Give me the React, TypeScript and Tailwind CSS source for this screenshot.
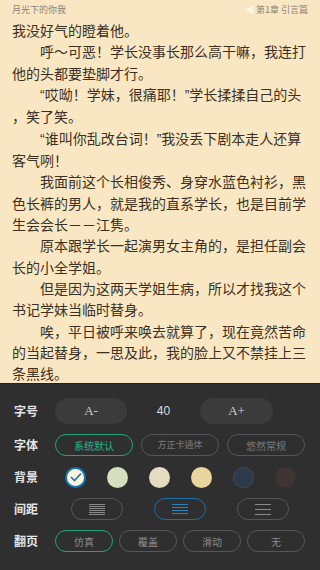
import React from "react";

const cjk = { fontFamily: '"Noto Sans CJK SC", "Noto Sans", sans-serif' };

const lines: { text: string; indent?: boolean }[] = [
  { text: "我没好气的瞪着他。" },
  { text: "呼～可恶！学长没事长那么高干嘛，我连打", indent: true },
  { text: "他的头都要垫脚才行。" },
  { text: "“哎呦！学妹，很痛耶！”学长揉揉自己的头", indent: true },
  { text: "，笑了笑。" },
  { text: "“谁叫你乱改台词！”我没丢下剧本走人还算", indent: true },
  { text: "客气咧！" },
  { text: "我面前这个长相俊秀、身穿水蓝色衬衫，黑", indent: true },
  { text: "色长裤的男人，就是我的直系学长，也是目前学" },
  { text: "生会会长－－江隽。" },
  { text: "原本跟学长一起演男女主角的，是担任副会", indent: true },
  { text: "长的小全学姐。" },
  { text: "但是因为这两天学姐生病，所以才找我这个", indent: true },
  { text: "书记学妹当临时替身。" },
  { text: "唉，平日被呼来唤去就算了，现在竟然苦命", indent: true },
  { text: "的当起替身，一思及此，我的脸上又不禁挂上三" },
  { text: "条黑线。" },
];

// curly quotes render full width in the CJK face, the reference uses narrow ones
function withNarrowQuotes(text: string) {
  return text.split(/([“”])/).map((part, i) =>
    part === "“" || part === "”" ? (
      <span key={i} style={{ fontFamily: '"Liberation Sans", sans-serif' }}>
        {part}
      </span>
    ) : (
      <React.Fragment key={i}>{part}</React.Fragment>
    )
  );
}

function Label({ children }: { children: React.ReactNode }) {
  return (
    <div className="w-[41px] shrink-0 text-[12px] font-bold text-[#e4e4e4]">{children}</div>
  );
}

function SpacingIcon({ rows, gap, color }: { rows: number; gap: number; color: string }) {
  const h = (rows - 1) * gap + 1;
  return (
    <svg width="16" height={h} viewBox={`0 0 16 ${h}`}>
      {Array.from({ length: rows }).map((_, i) => (
        <rect key={i} x="0" y={i * gap} width="16" height="1" fill={color} />
      ))}
    </svg>
  );
}

export default function App() {
  const swatches = ["#d6dfbf", "#e3dcc1", "#ebd59f", "#2c3a4b", "#3e3434"];
  return (
    <div className="w-[320px] h-[570px] flex flex-col overflow-hidden" style={cjk}>
      {/* reading page */}
      <div className="h-[383px] shrink-0 bg-[#f9e7c3] text-[#3b3022]">
        <div className="h-[20px] px-[12px] flex items-center justify-between text-[9px] text-[#8c8375]">
          <span>月光下的你我</span>
          <span className="flex items-center gap-[2px]">
            <span className="text-[#fff8ea]">◀</span>第1章 引言篇
          </span>
        </div>
        <div className="px-[12px] text-[14px] leading-[21.33px]">
          {lines.map((l, i) => (
            <div key={i} className={`whitespace-nowrap ${l.indent ? "pl-[28px]" : ""}`}>
              {withNarrowQuotes(l.text)}
            </div>
          ))}
        </div>
      </div>

      {/* settings panel */}
      <div className="flex-1 bg-[#2f2f2f] border-t border-[#232323] pl-[14px] pt-[14px] flex flex-col gap-[10px]">
        <div className="h-[26px] flex items-center">
          <Label>字号</Label>
          <button
            className="w-[72px] h-[26px] rounded-full bg-[#3b3b3b] text-[13px] text-[#cfcfcf]"
            style={{ fontFamily: '"Liberation Serif", serif' }}
          >
            A-
          </button>
          <div className="w-[73px] text-center text-[12px] text-[#dcdcdc]" style={{ fontFamily: '"Liberation Sans", sans-serif' }}>
            40
          </div>
          <button
            className="w-[73px] h-[26px] rounded-full bg-[#3b3b3b] text-[13px] text-[#cfcfcf]"
            style={{ fontFamily: '"Liberation Serif", serif' }}
          >
            A+
          </button>
        </div>

        <div className="h-[22px] flex items-center">
          <Label>字体</Label>
          <div className="flex gap-[8px]">
            <button className="w-[78px] h-[22px] rounded-full border border-[#1fa37a] text-[10px] text-[#27b585]">
              系统默认
            </button>
            <button
              className="w-[78px] h-[22px] rounded-full border border-[#575757] text-[9px] text-[#7a7a7a]"
              style={{ fontFamily: '"Noto Sans CJK TC", serif' }}
            >
              方正卡通体
            </button>
            <button
              className="w-[78px] h-[22px] rounded-full border border-[#575757] text-[10px] text-[#7a7a7a]"
              style={{ fontFamily: '"Noto Sans CJK JP", serif' }}
            >
              悠然常规
            </button>
          </div>
        </div>

        <div className="h-[22px] flex items-center">
          <Label>背景</Label>
          <div className="ml-[10px] flex gap-[21px]">
            <div className="size-[21px] rounded-full bg-[#fcf7dc] border-[2px] border-[#1a73b0] flex items-center justify-center">
              <svg width="12" height="10" viewBox="0 0 12 10">
                <path d="M1 5l3.5 3.5L11 1.5" fill="none" stroke="#1a73b0" strokeWidth="1.6" />
              </svg>
            </div>
            {swatches.map((c, i) => (
              <div
                key={c}
                className={`size-[21px] rounded-full ${i === 3 ? "border border-[#3f4c5c]" : ""}`}
                style={{ backgroundColor: c }}
              />
            ))}
          </div>
        </div>

        <div className="h-[22px] flex items-center">
          <Label>间距</Label>
          <div className="ml-[16px] flex gap-[31px]">
            <button className="w-[52px] h-[22px] rounded-full border border-[#575757] flex items-center justify-center">
              <SpacingIcon rows={6} gap={2} color="#8a8a8a" />
            </button>
            <button className="w-[52px] h-[22px] rounded-full border border-[#1a6fa8] flex items-center justify-center">
              <SpacingIcon rows={4} gap={3} color="#2a84c4" />
            </button>
            <button className="w-[52px] h-[22px] rounded-full border border-[#575757] flex items-center justify-center">
              <SpacingIcon rows={3} gap={5} color="#8a8a8a" />
            </button>
          </div>
        </div>

        <div className="h-[22px] flex items-center">
          <Label>翻页</Label>
          <div className="flex gap-[6px]">
            {["仿真", "覆盖", "滑动", "无"].map((t, i) => (
              <button
                key={t}
                className={`w-[58px] h-[22px] rounded-full border text-[10px] text-[#8a8a8a] ${
                  i === 0 ? "border-[#1fa37a]" : "border-[#575757]"
                }`}
              >
                {t}
              </button>
            ))}
          </div>
        </div>
      </div>
    </div>
  );
}
